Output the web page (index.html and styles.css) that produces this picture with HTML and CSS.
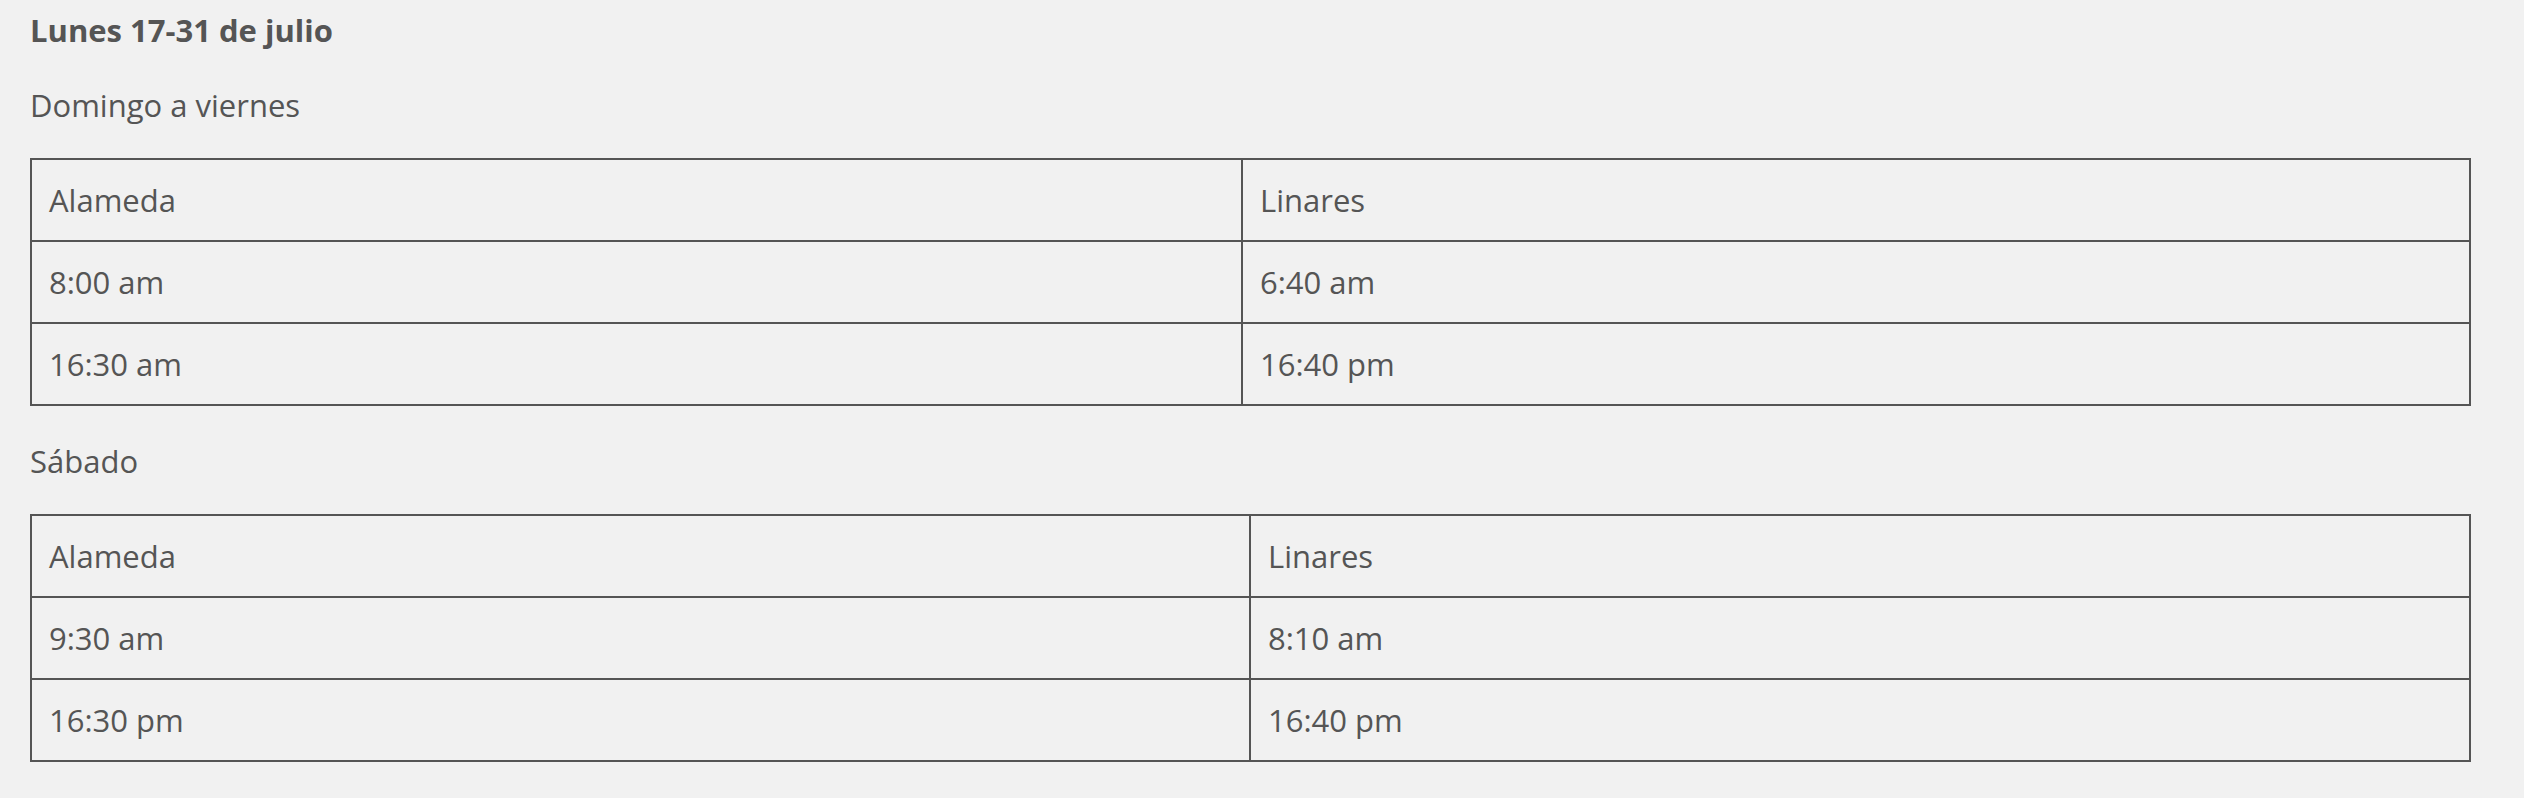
FILE: index.html
```html
<!DOCTYPE html>
<html lang="es">
<head>
<meta charset="utf-8">
<title>Horarios</title>
<link rel="stylesheet" href="styles.css">
</head>
<body>
<main class="page">
  <p class="title"><strong>Lunes 17-31 de julio</strong></p>
  <p class="label">Domingo a viernes</p>
  <table class="schedule schedule-week">
    <colgroup><col class="col-a"><col class="col-b"></colgroup>
    <tbody>
      <tr><td>Alameda</td><td>Linares</td></tr>
      <tr><td>8:00 am</td><td>6:40 am</td></tr>
      <tr><td>16:30 am</td><td>16:40 pm</td></tr>
    </tbody>
  </table>
  <p class="label">Sábado</p>
  <table class="schedule schedule-sat">
    <colgroup><col class="col-a"><col class="col-b"></colgroup>
    <tbody>
      <tr><td>Alameda</td><td>Linares</td></tr>
      <tr><td>9:30 am</td><td>8:10 am</td></tr>
      <tr><td>16:30 pm</td><td>16:40 pm</td></tr>
    </tbody>
  </table>
</main>
</body>
</html>
```
FILE: styles.css
```css
html, body {
  margin: 0;
  padding: 0;
  background: #f1f1f1;
}
body {
  font-family: "Open Sans", "Noto Sans", sans-serif;
  color: #555555;
  font-size: 31px;
}
.page {
  padding: 0 53px 0 30px;
  display: flow-root;
}
.title {
  margin: 0;
  padding-top: 10px;
  line-height: 40px;
  font-size: 31px;
}
.title strong { font-weight: 700; }
.label {
  margin: 30px 0 28px;
  line-height: 50px;
}
.schedule {
  width: 100%;
  border-collapse: collapse;
  table-layout: fixed;
}
.schedule td {
  border: 2px solid #555555;
  height: 80px;
  padding: 0 17px;
  vertical-align: middle;
  line-height: 1;
}
.schedule-week .col-a { width: 1211px; }
.schedule-sat .col-a { width: 1219px; }
```
